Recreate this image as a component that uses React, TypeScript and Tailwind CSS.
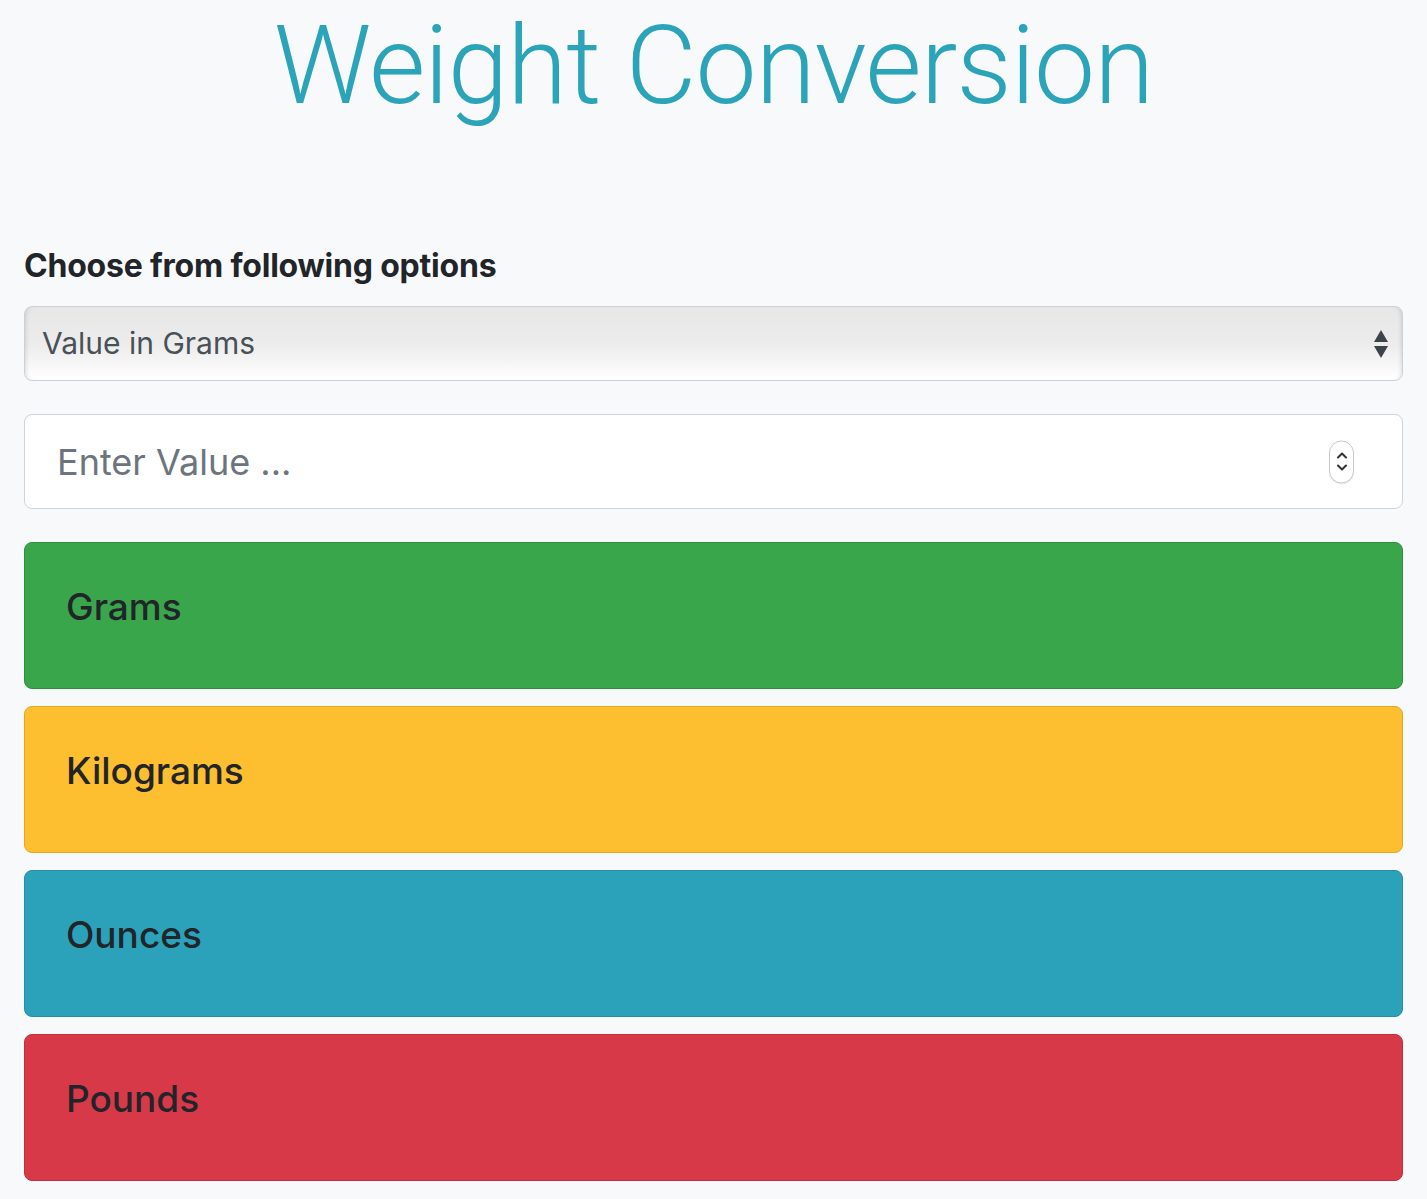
import { ChevronUp, ChevronDown } from "lucide-react";

const units = [
  { name: "Grams", cls: "bg-[#3aa64b] border-[#2f8f3f]" },
  { name: "Kilograms", cls: "bg-[#fdbe30] border-[#e3a820]" },
  { name: "Ounces", cls: "bg-[#2ba2ba] border-[#2290a6]" },
  { name: "Pounds", cls: "bg-[#d83948] border-[#c22e3c]" },
];

const App = () => {
  return (
    <div className="min-h-[1199px] bg-[#f8f9fa] font-['Inter','Liberation_Sans',sans-serif] text-[#212529]">
      <div className="px-[24px] pt-[2px]">
        <h1 className="text-center font-['Roboto','Liberation_Sans',sans-serif] font-light text-[109px] leading-[128px] text-[#2ba3b9] tracking-[-1px]">
          Weight Conversion
        </h1>
        <div className="mt-[116px]">
          <label className="block text-[32px] font-bold leading-[40px] mb-[20px] tracking-[-0.2px]">
            Choose from following options
          </label>
          <div className="relative h-[75px] rounded-[8px] border border-[#cdd1d6] bg-gradient-to-b from-[#e7e7e8] via-[#ececed] to-white shadow-[inset_4px_0_4px_-3px_rgba(0,0,0,0.12),inset_-4px_0_4px_-3px_rgba(0,0,0,0.12)] flex items-center px-[17px]">
            <span className="text-[30px] text-[#495057]">Value in Grams</span>
            <svg
              className="absolute right-[13px] top-1/2 -translate-y-1/2"
              width="16"
              height="30"
              viewBox="0 0 16 30"
            >
              <path d="M8 1 L15 13 L1 13 Z" fill="#3d434b" />
              <path d="M1 17 L15 17 L8 29 Z" fill="#3d434b" />
            </svg>
          </div>
          <div className="relative mt-[33px] h-[95px] rounded-[8px] border border-[#ced4da] bg-white flex items-center px-[32px]">
            <span className="text-[36px] text-[#6c757d]">Enter Value ...</span>
            <div className="absolute right-[48px] top-1/2 -translate-y-1/2 w-[25px] h-[43px] rounded-full border border-[#c8c8c8] bg-white flex flex-col items-center justify-center shadow-[0_1px_1px_rgba(0,0,0,0.08)]">
              <ChevronUp size={16} strokeWidth={3} className="text-[#333] -mb-[2px]" />
              <ChevronDown size={16} strokeWidth={3} className="text-[#333] -mt-[2px]" />
            </div>
          </div>
          <div className="mt-[33px] flex flex-col gap-[17px]">
            {units.map((u) => (
              <div
                key={u.name}
                className={`h-[147px] rounded-[8px] border ${u.cls} px-[41px] pt-[42px]`}
              >
                <h5 className="text-[37px] font-medium leading-[44px]">{u.name}</h5>
              </div>
            ))}
          </div>
        </div>
      </div>
    </div>
  );
};

export default App;
